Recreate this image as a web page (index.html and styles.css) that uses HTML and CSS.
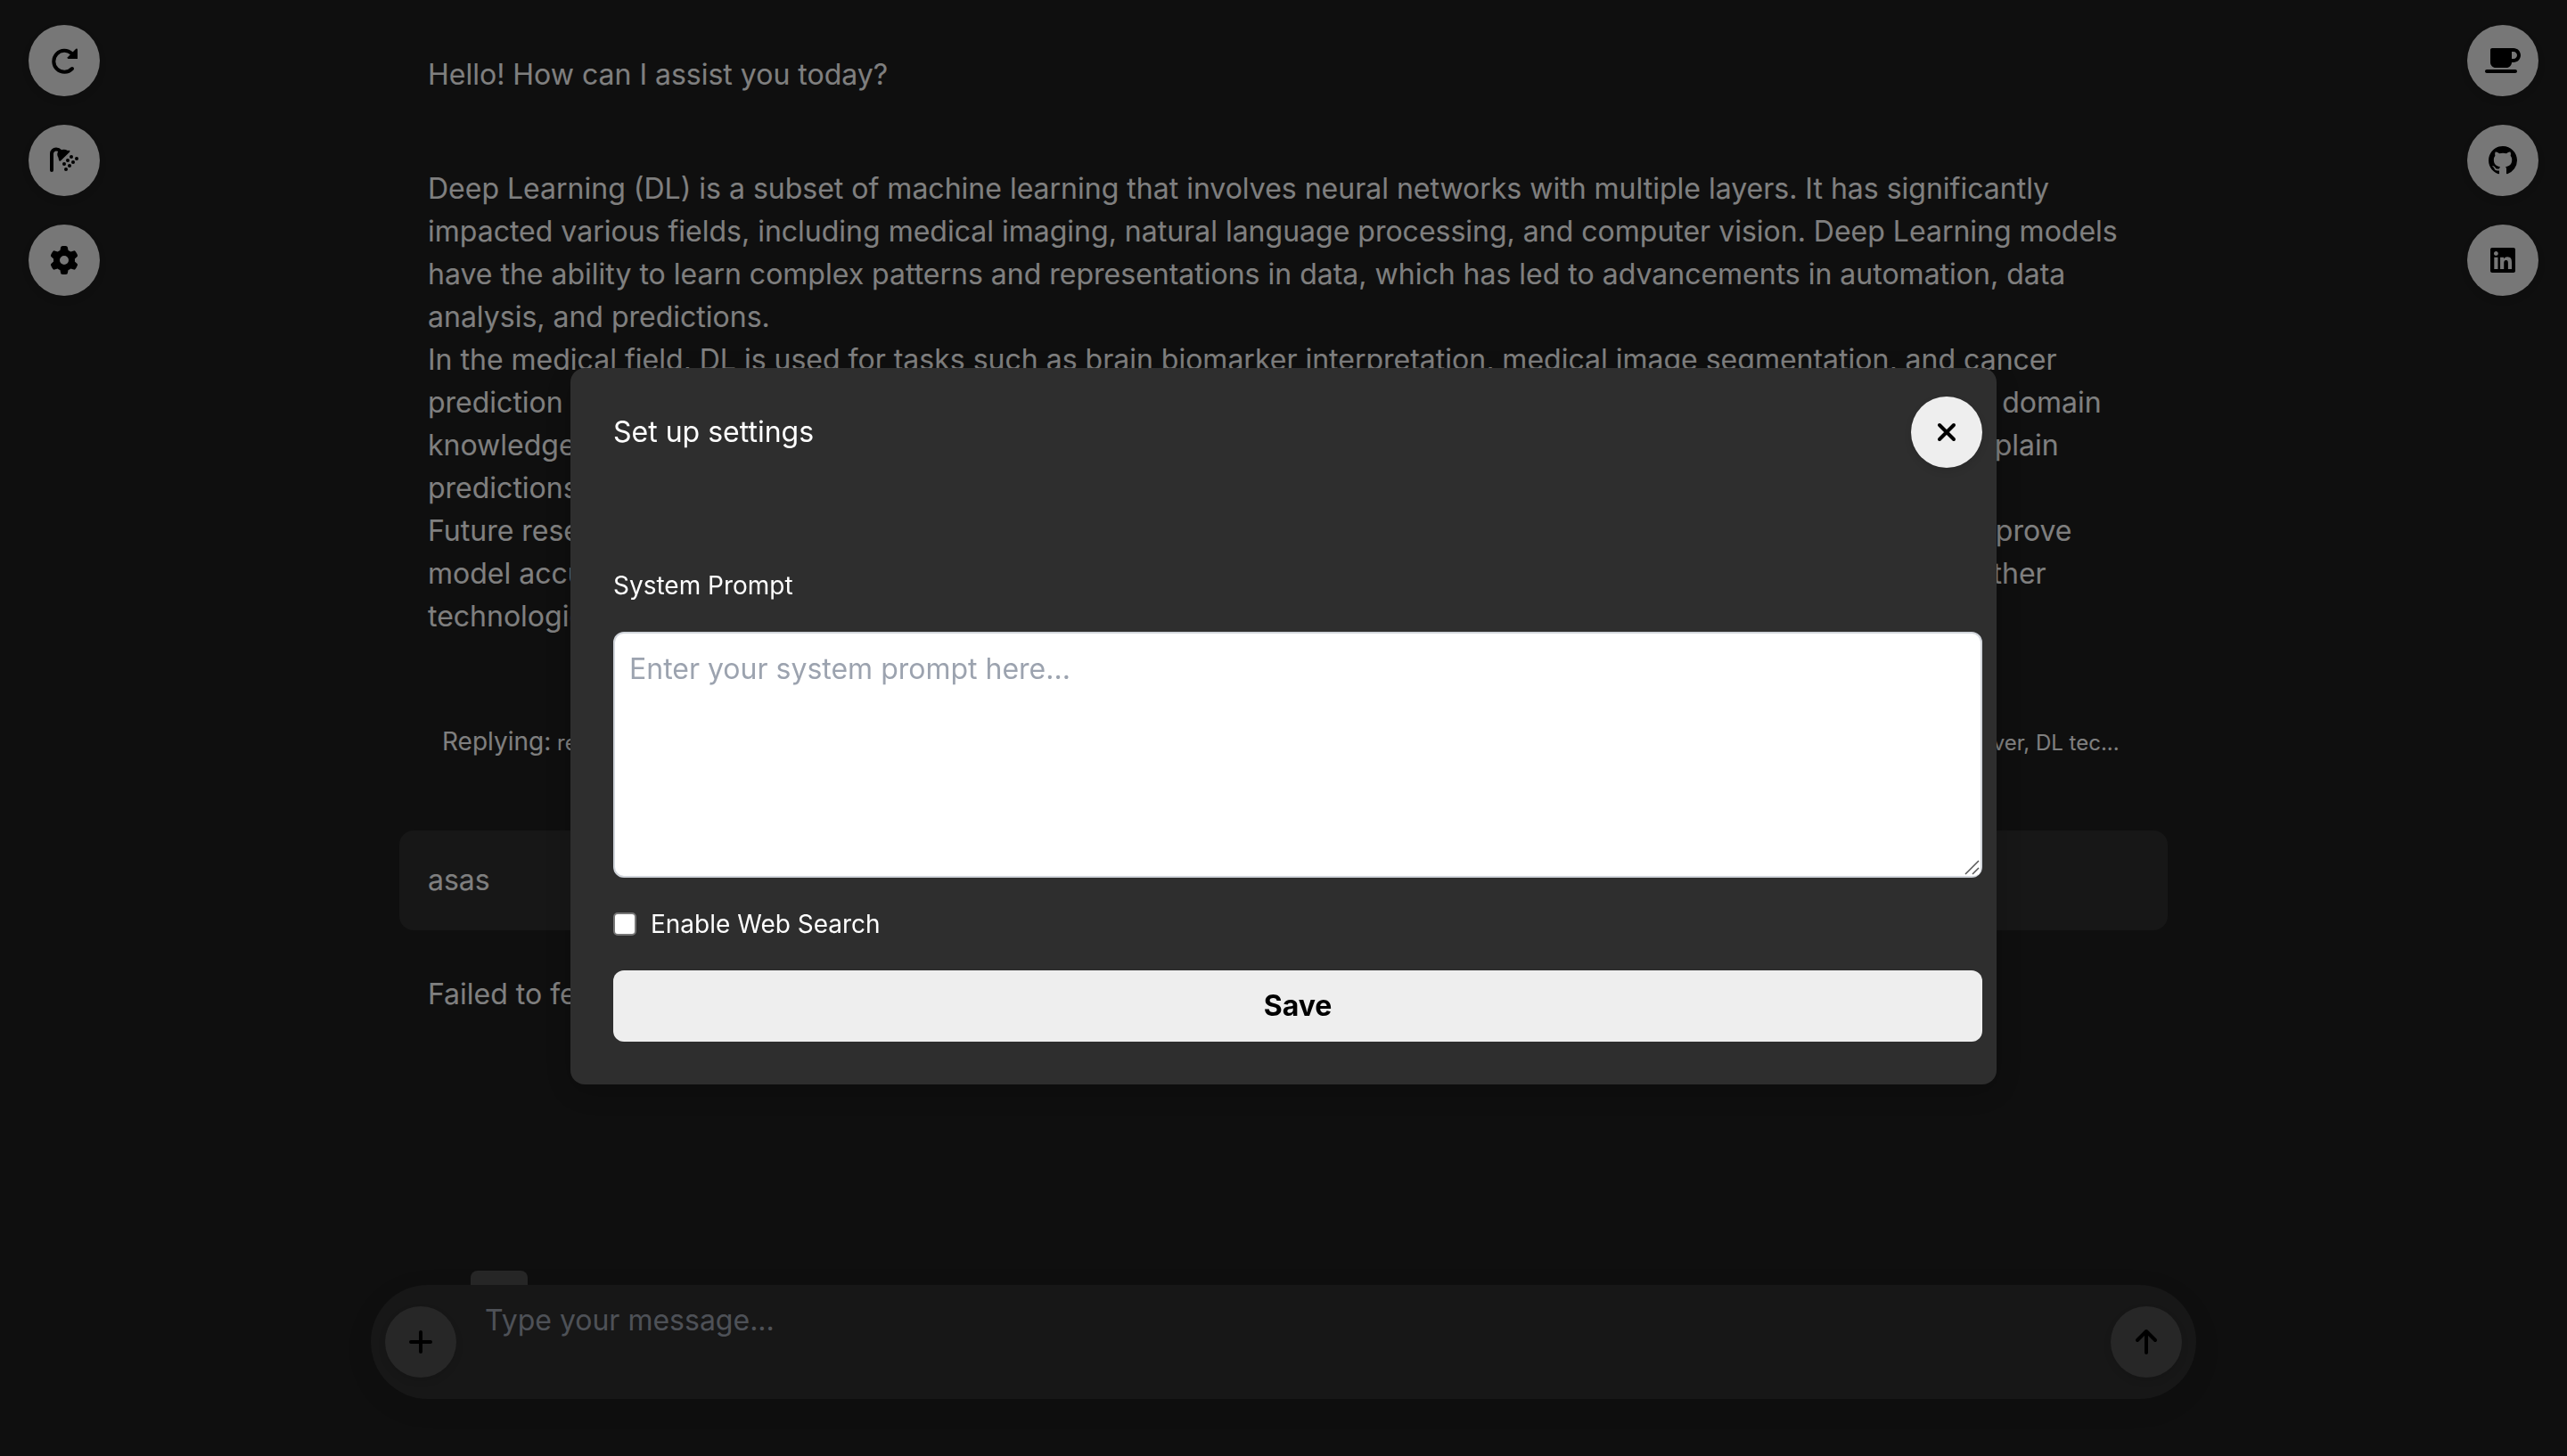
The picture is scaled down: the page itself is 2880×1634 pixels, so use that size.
FILE: index.html
```html
<!DOCTYPE html>
<html lang="en">
<head>
<meta charset="utf-8">
<title>Chat</title>
<link rel="stylesheet" href="styles.css">
</head>
<body>
<div class="app">
  <nav class="rail" aria-label="Chat actions">
    <button class="round" type="button" aria-label="Restart"><svg width="32" height="32" viewBox="0 0 512 512"><path d="M400 400A192 192 0 1 1 392 128" fill="none" stroke="#000" stroke-width="64" stroke-linecap="round"/><path d="M496 56V224H330q-24-6-12-28L468 44q20-14 28 12z"/></svg></button>
    <button class="round" type="button" aria-label="Clear chat"><svg width="32" height="32" viewBox="0 0 32 32"><path d="M2 27V8.500a5 5 0 0 1 5-5q3 0 4.500 2" fill="none" stroke="#000" stroke-width="4" stroke-linecap="round"/><path d="M9.500 5.500Q15 2.500 20 5L22 4.700q1 1 0 2L12 16.500q-1.500 1-2-1L9.500 13Q7 9 9.500 5.500z"/><g><circle cx="24" cy="12" r="2"/><circle cx="30" cy="14" r="2"/><circle cx="20" cy="16" r="2"/><circle cx="26" cy="18" r="2"/><circle cx="16" cy="20" r="2"/><circle cx="22" cy="22" r="2"/><circle cx="18" cy="26" r="2"/></g></svg></button>
    <button class="round" type="button" aria-label="Settings"><svg width="32" height="32" viewBox="0 0 512 512"><path d="M495.900 166.600c3.200 8.700 .5 18.400-6.400 24.600l-43.300 39.400c1.100 8.300 1.700 16.800 1.700 25.400s-.6 17.100-1.700 25.400l43.300 39.400c6.900 6.200 9.600 15.900 6.400 24.600c-4.400 11.900-9.700 23.300-15.800 34.300l-4.700 8.100c-6.600 11-14 21.400-22.100 31.200c-5.900 7.200-15.700 9.600-24.500 6.800l-55.700-17.700c-13.400 10.300-28.200 18.900-44 25.400l-12.500 57.100c-2 9.100-9 16.300-18.200 17.800c-13.800 2.300-28 3.500-42.500 3.500s-28.700-1.200-42.500-3.500c-9.200-1.500-16.200-8.700-18.200-17.800l-12.500-57.100c-15.800-6.500-30.600-15.100-44-25.400L83.100 425.900c-8.800 2.800-18.600 .3-24.500-6.800c-8.100-9.800-15.500-20.200-22.100-31.200l-4.700-8.100c-6.100-11-11.400-22.400-15.800-34.300c-3.200-8.700-.5-18.400 6.400-24.600l43.300-39.400C64.600 273.100 64 264.600 64 256s.6-17.100 1.700-25.400L22.400 191.200c-6.900-6.200-9.600-15.900-6.400-24.600c4.400-11.900 9.700-23.300 15.800-34.300l4.700-8.100c6.600-11 14-21.400 22.100-31.200c5.900-7.200 15.700-9.600 24.500-6.800l55.700 17.700c13.400-10.300 28.200-18.900 44-25.400l12.500-57.100c2-9.100 9-16.300 18.200-17.800C227.300 1.200 241.500 0 256 0s28.700 1.200 42.500 3.500c9.200 1.500 16.200 8.700 18.200 17.800l12.500 57.100c15.800 6.500 30.600 15.100 44 25.400l55.700-17.700c8.800-2.800 18.600-.3 24.500 6.800c8.100 9.800 15.500 20.200 22.100 31.200l4.700 8.100c6.100 11 11.400 22.400 15.800 34.300zM256 336a80 80 0 1 0 0-160 80 80 0 1 0 0 160z"/></svg></button>
  </nav>

  <main class="chat">
    <div class="messages">
      <p class="message">Hello! How can I assist you today?</p>
      <p class="message">Deep Learning (DL) is a subset of machine learning that involves neural networks with multiple layers. It has significantly impacted various fields, including medical imaging, natural language processing, and computer vision. Deep Learning models have the ability to learn complex patterns and representations in data, which has led to advancements in automation, data analysis, and predictions.<br>In the medical field, DL is used for tasks such as brain biomarker interpretation, medical image segmentation, and cancer prediction tasks. However, DL techniques are not reliable and require large amounts of high-quality training data and domain knowledge. These models are often considered black boxes, which makes it hard for doctors and patients to truly explain predictions and trust their outcomes.<br>Future research should focus on designing interpretable models, building larger datasets, and finding key ways to improve model accuracy and generalization. It should study how deep learning can be combined with current methods and other technologies.</p>
      <p class="reply">Replying:<small> representations in data, which has led to advancements in automation, data analysis, and predictions. In the medical field, DL is popular. However, DL tec...</small></p>
      <p class="message own">asas</p>
      <p class="message">Failed to fetch response.</p>
    </div>
    <form class="composer-area">
      <span class="tab"></span>
      <div class="composer">
        <button class="round dim" type="button" aria-label="Add"><svg width="32" height="32" viewBox="0 0 32 32"><path d="M16 5v22M5 16h22" fill="none" stroke="#000" stroke-width="4" stroke-linecap="round"/></svg></button>
        <textarea class="composer-input" rows="2" placeholder="Type your message..." aria-label="Message"></textarea>
        <button class="round dim" type="submit" aria-label="Send"><svg width="32" height="32" viewBox="0 0 32 32"><path d="M16 28V4M6 14L16 4L26 14" fill="none" stroke="#000" stroke-width="4" stroke-linecap="round" stroke-linejoin="round"/></svg></button>
      </div>
    </form>
  </main>

  <nav class="rail" aria-label="Links">
    <a class="round" href="#coffee" aria-label="Buy a coffee"><svg width="40" height="32" viewBox="0 0 640 512"><path d="M96 64c0-17.700 14.300-32 32-32H448h64c70.700 0 128 57.300 128 128s-57.300 128-128 128H480c0 53-43 96-96 96H192c-53 0-96-43-96-96V64zM480 224h32c35.300 0 64-28.700 64-64s-28.700-64-64-64H480V224zM32 416H544c17.700 0 32 14.300 32 32s-14.300 32-32 32H32c-17.700 0-32-14.300-32-32s14.300-32 32-32z"/></svg></a>
    <a class="round" href="#github" aria-label="GitHub"><svg width="32" height="32" viewBox="0 0 16 16"><path d="M8 0C3.580 0 0 3.580 0 8c0 3.540 2.290 6.530 5.470 7.590.4.070.55-.17.55-.38 0-.19-.01-.82-.01-1.490-2.010.37-2.530-.49-2.690-.94-.09-.23-.48-.94-.82-1.130-.28-.15-.68-.52-.01-.53.63-.01 1.080.58 1.230.82.72 1.210 1.870.87 2.330.66.07-.52.28-.87.51-1.070-1.780-.2-3.640-.89-3.640-3.950 0-.87.31-1.590.82-2.150-.08-.2-.36-1.020.08-2.120 0 0 .67-.21 2.200.82.64-.18 1.320-.27 2-.27s1.360.09 2 .27c1.530-1.040 2.200-.82 2.200-.82.44 1.100.16 1.920.08 2.120.51.56.82 1.270.82 2.150 0 3.070-1.870 3.750-3.650 3.950.29.25.54.73.54 1.480 0 1.070-.01 1.930-.01 2.200 0 .21.15.46.55.38A8.010 8.010 0 0 0 16 8c0-4.420-3.580-8-8-8z"/></svg></a>
    <a class="round" href="#linkedin" aria-label="LinkedIn"><svg width="28" height="32" viewBox="0 0 448 512"><path d="M416 32H31.900C14.300 32 0 46.500 0 64.300v383.400C0 465.500 14.300 480 31.900 480H416c17.600 0 32-14.500 32-32.300V64.300c0-17.800-14.400-32.300-32-32.300zM135.400 416H69V202.200h66.500V416zm-33.200-243c-21.300 0-38.500-17.300-38.500-38.500S80.900 96 102.200 96c21.200 0 38.500 17.300 38.500 38.500 0 21.300-17.200 38.500-38.500 38.500zm282.100 243h-66.400V312c0-24.800-.5-56.700-34.500-56.700-34.600 0-39.900 27-39.900 54.900V416h-66.400V202.200h63.700v29.200h.9c8.900-16.800 30.600-34.500 62.900-34.500 67.200 0 79.700 44.300 79.700 101.900V416z"/></svg></a>
  </nav>
</div>

<div class="overlay">
  <section class="modal" role="dialog" aria-modal="true" aria-labelledby="modal-title">
    <header class="modal-head">
      <h2 class="modal-title" id="modal-title">Set up settings</h2>
      <button class="round" type="button" aria-label="Close"><svg width="32" height="32" viewBox="0 0 32 32"><path d="M8 8L24 24M24 8L8 24" fill="none" stroke="#000" stroke-width="4" stroke-linecap="round"/></svg></button>
    </header>
    <form class="settings">
      <label class="label" for="prompt">System Prompt</label>
      <div class="prompt-wrap">
        <textarea class="prompt" id="prompt" placeholder="Enter your system prompt here..."></textarea>
        <svg class="grip" width="20" height="20" viewBox="0 0 20 20" aria-hidden="true"><path d="M0 0H20V12Q20 20 12 20H0z" fill="#fff"/><path d="M3 18L18 3M11 18L18 11" fill="none" stroke="#555" stroke-width="1.500"/></svg>
      </div>
      <label class="label check"><input class="box" type="checkbox">Enable Web Search</label>
      <button class="save" type="submit">Save</button>
    </form>
  </section>
</div>
</body>
</html>
```
FILE: styles.css
```css
* {
  box-sizing: border-box;
}

body {
  margin: 0;
  background: #1e1e1e;
  color: #fff;
  font: 32px/48px Inter, "Liberation Sans", sans-serif;
}

button,
textarea {
  font: inherit;
}

.app {
  display: flex;
  justify-content: space-between;
  height: 100vh;
}

.rail {
  display: flex;
  flex-direction: column;
  gap: 32px;
  padding: 28px 32px;
}

.round {
  display: flex;
  align-items: center;
  justify-content: center;
  flex: none;
  width: 80px;
  height: 80px;
  padding: 0;
  border: 0;
  border-radius: 50%;
  background: #eee;
  box-shadow: 0 4px 8px rgba(0, 0, 0, 0.1);
}

.dim {
  background: #4e4e4e;
}

.chat {
  display: flex;
  flex-direction: column;
  flex: 0 1 2048px;
  min-width: 0;
}

.messages {
  display: flex;
  flex-direction: column;
  flex: 1;
  gap: 16px;
  min-height: 0;
  padding: 28px 32px 0;
  overflow: hidden;
}

.message {
  margin: 0;
  padding: 32px;
}

.own {
  border-radius: 16px;
  background: #2e2e2e;
}

.reply {
  margin: 0;
  padding: 40px 48px 56px;
  overflow: hidden;
  font-size: 28px;
  line-height: 56px;
  text-overflow: ellipsis;
  white-space: nowrap;
}

.reply small {
  font-size: 24px;
  line-height: 24px;
}

.composer-area {
  display: flex;
  flex-direction: column;
  padding-bottom: 64px;
}

.tab {
  width: 64px;
  height: 16px;
  margin-left: 112px;
  border-radius: 8px 8px 0 0;
  background: #4e4e4e;
}

.composer {
  display: flex;
  align-items: center;
  gap: 16px;
  height: 128px;
  padding: 0 16px;
  border-radius: 64px;
  background: #2e2e2e;
  box-shadow: 0 8px 32px rgba(0, 0, 0, 0.08);
}

.composer-input {
  flex: 1;
  height: 96px;
  padding: 0 16px;
  border: 0;
  background: none;
  color: #fff;
  resize: none;
}

textarea::placeholder {
  color: #9ca3af;
}

.overlay {
  position: fixed;
  inset: 0;
  display: flex;
  align-items: center;
  justify-content: center;
  padding-bottom: 4px;
  background: rgba(0, 0, 0, 0.5);
}

.modal {
  width: 1600px;
  max-width: 100%;
  padding: 32px 16px 48px 48px;
  border-radius: 16px;
  background: #2e2e2e;
  box-shadow: 0 8px 32px rgba(0, 0, 0, 0.2);
}

.modal-head {
  display: flex;
  align-items: center;
  justify-content: space-between;
}

.modal-title {
  margin: 0;
  font-size: 32px;
  font-weight: 400;
}

.settings {
  display: flex;
  flex-direction: column;
  padding-top: 112px;
}

.label {
  font-size: 28px;
  line-height: 40px;
}

.prompt-wrap {
  position: relative;
  margin: 32px 0;
}

.prompt {
  display: block;
  width: 100%;
  height: 276px;
  padding: 16px;
  border: 2px solid #d1d5db;
  border-radius: 12px;
  background: #fff;
  color: #000;
  resize: vertical;
}

/* enlarged resize handle, drawn over the native one */
.grip {
  position: absolute;
  right: 2px;
  bottom: 2px;
  pointer-events: none;
}

.check {
  display: flex;
  align-items: center;
  gap: 16px;
  margin-bottom: 32px;
}

.box {
  width: 26px;
  height: 26px;
  margin: 0;
  border: 2px solid #767676;
  border-radius: 5px;
  background: #fff;
  appearance: none;
}

.box:checked {
  background: #0075ff;
}

.save {
  height: 80px;
  border: 0;
  border-radius: 12px;
  background: #eee;
  color: #000;
  font-weight: 700;
}
```
